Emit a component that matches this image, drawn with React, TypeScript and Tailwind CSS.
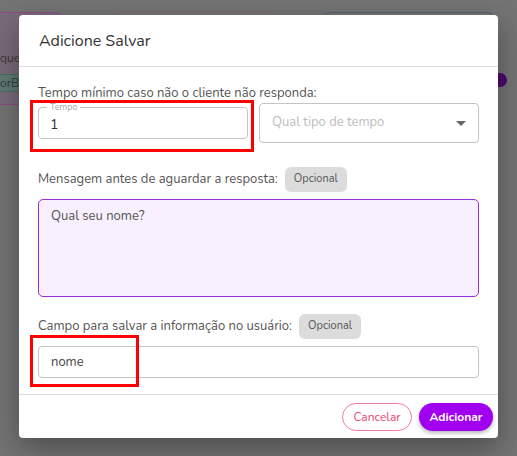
import { useState } from "react";

const font = { fontFamily: '"Nunito", Lato, "Open Sans", sans-serif' };

function Background() {
  return (
    <div className="absolute inset-0 bg-[#747474] overflow-hidden">
      <div className="flex gap-[39px] pt-3">
        <div className="w-[96px] h-[93px] -ml-[30px] rounded-xl border border-[#8e4a86] bg-[#7a6a79] flex flex-col pt-[37px] pl-[29px] gap-[8px]">
          <span className="text-[12px] leading-4 text-[#3a3238]">quet</span>
          <span className="w-max text-[12px] leading-4 pr-1 bg-[#5f7b74] text-[#2e3e3a] border-y border-[#4a6a62]">orBl</span>
        </div>
        <div className="w-[176px] h-[60px] rounded-xl border border-[#8a6a6a]" />
        <div className="w-[178px] h-[60px] rounded-xl border border-[#4f5f7a]" />
      </div>
      <div className="absolute left-[493px] top-[73px] w-[14px] h-[14px] rounded-full bg-[#4a0a6a]" />
    </div>
  );
}

function Chip() {
  return (
    <span className="inline-flex items-center h-[25px] px-[9px] rounded-md bg-[#dcdcdc] text-[11px] text-[#555]">
      Opcional
    </span>
  );
}

export default function App() {
  const [tempo, setTempo] = useState("1");
  const [mensagem, setMensagem] = useState("Qual seu nome?");
  const [campo, setCampo] = useState("nome");

  return (
    <div className="relative w-[517px] h-[456px] overflow-hidden" style={font}>
      <Background />
      <div className="absolute left-[19px] top-[15px] w-[479px] bg-white rounded shadow-[0_10px_30px_rgba(0,0,0,0.35)] flex flex-col">
        <div className="h-[52px] flex items-center px-5 border-b border-[#dedede]">
          <h2 className="text-[16px] text-[#333]">Adicione Salvar</h2>
        </div>

        <div className="flex flex-col px-[19px] pt-4 pb-[16px] border-b border-[#dedede]">
          <p className="text-[13px] leading-5 text-[#555]">Tempo mínimo caso não o cliente não responda:</p>
          <div className="flex items-center gap-[11px] h-[40px]">
            <div className="relative w-[210px] h-[32px] rounded border border-[#c4c4c4]">
              <span className="absolute -top-[6px] left-[8px] px-[3px] bg-white text-[9px] leading-[10px] text-[#aaa]">Tempo</span>
              <input
                value={tempo}
                onChange={(e) => setTempo(e.target.value)}
                className="w-full h-full px-[11px] pt-[3px] outline-none text-[14px] text-[#333] bg-transparent"
                style={font}
              />
            </div>
            <div className="flex-1 h-[40px] rounded border border-[#c4c4c4] flex items-center justify-between pl-3 pr-3">
              <span className="text-[13px] text-[#bdbdbd]">Qual tipo de tempo</span>
              <svg width="10" height="5" viewBox="0 0 10 5">
                <path d="M0 0 L10 0 L5 5 Z" fill="#666" />
              </svg>
            </div>
          </div>

          <div className="flex items-center gap-[7px] mt-6">
            <span className="text-[13px] text-[#555]">Mensagem antes de aguardar a resposta:</span>
            <Chip />
          </div>
          <textarea
            value={mensagem}
            onChange={(e) => setMensagem(e.target.value)}
            className="mt-[7px] h-[98px] resize-none rounded-[5px] border-[1.5px] border-[#9a2fd6] bg-[#f8f0fe] px-3 py-[7px] text-[13px] text-[#555] outline-none"
            style={font}
          />

          <div className="flex items-center gap-[7px] mt-[17px]">
            <span className="text-[13px] text-[#555]">Campo para salvar a informação no usuário:</span>
            <Chip />
          </div>
          <input
            value={campo}
            onChange={(e) => setCampo(e.target.value)}
            className="mt-[7px] h-[32px] rounded border border-[#c4c4c4] px-3 text-[13px] text-[#444] outline-none"
            style={font}
          />
        </div>

        <div className="flex justify-end items-center gap-[7px] pt-[8px] pb-[7px] pr-[5px]">
          <button className="h-[28px] w-[70px] rounded-full border border-[#f27a9e] text-[#e8456f] text-[12px] bg-white" style={font}>
            Cancelar
          </button>
          <button className="h-[28px] w-[74px] rounded-full bg-[#a100f0] text-white text-[12px] font-bold shadow-[0_2px_4px_rgba(0,0,0,0.3)]" style={font}>
            Adicionar
          </button>
        </div>

        <div className="absolute left-[11px] top-[85px] w-[224px] h-[52px] border-[3px] border-[#ff0000] pointer-events-none" />
        <div className="absolute left-[11px] top-[320px] w-[109px] h-[52px] border-[3px] border-[#ff0000] pointer-events-none" />
      </div>
    </div>
  );
}
